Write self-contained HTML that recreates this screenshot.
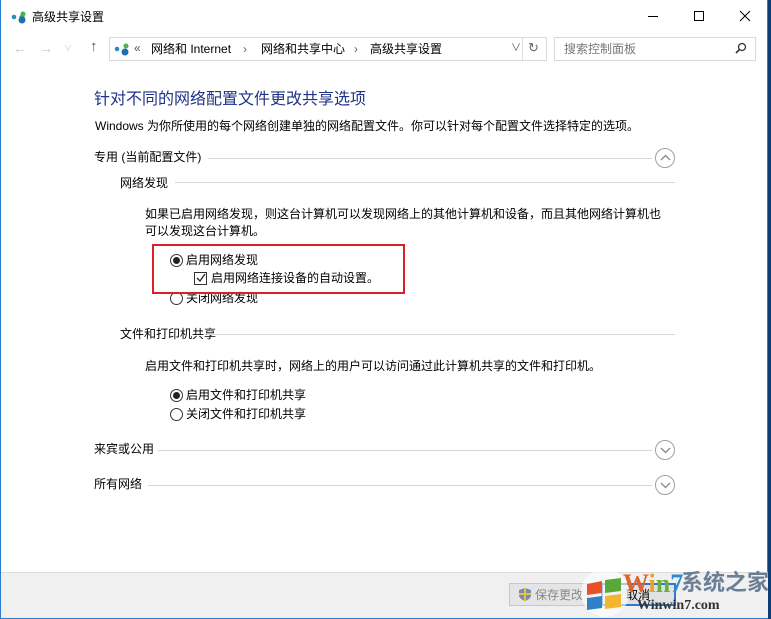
<!DOCTYPE html>
<html><head><meta charset="utf-8"><style>
*{margin:0;padding:0;box-sizing:border-box}
body{width:771px;height:619px;overflow:hidden;background:#0b3e78;font-family:"Liberation Sans","Noto Sans CJK SC","Microsoft YaHei",sans-serif;font-size:12px;color:#000;position:relative}
.win{position:absolute;left:0;top:0;width:768px;height:619px;background:#fff;border:1px solid #2b7bd0;border-top:none}
.a{position:absolute;white-space:nowrap;line-height:14px}
.ln{position:absolute;height:1px;background:#d6d6d6}
.circ{position:absolute;width:20px;height:20px;border:1px solid #a0a0a0;border-radius:50%;}
.circ svg{position:absolute;left:4px;top:5px}
.rad{position:absolute;width:13px;height:13px;border:1px solid #333;border-radius:50%;background:#fff}
.rad.on::after{content:"";position:absolute;left:2px;top:2px;width:7px;height:7px;border-radius:50%;background:#222}
</style></head><body>
<div class="win">
<svg class="a" style="left:10px;top:9px" width="18" height="16"><circle cx="3" cy="8" r="2.3" fill="#2a8bc9"/><path d="M8 8 L12 3 L14 9 Z" fill="#3aa84a"/><circle cx="11" cy="11" r="3.5" fill="#1f6fb5"/><circle cx="12" cy="5" r="2.5" fill="#46b54e"/></svg>
<div class="a" style="left:31px;top:10px;font-size:12px">高级共享设置</div>
<div class="a" style="left:647px;top:16px;width:10px;height:1px;background:#000"></div>
<div class="a" style="left:693px;top:11px;width:10px;height:10px;border:1px solid #000"></div>
<svg class="a" style="left:738px;top:10px" width="12" height="12"><path d="M1 1L11 11M11 1L1 11" stroke="#000" stroke-width="1"/></svg>
<div class="a" style="left:12px;top:41px;color:#c8c8c8;font-size:14px">←</div>
<div class="a" style="left:38px;top:41px;color:#c8c8c8;font-size:14px">→</div>
<div class="a" style="left:63px;top:42px;color:#c8c8c8;font-size:8px">∨</div>
<div class="a" style="left:89px;top:40px;color:#555;font-size:15px">↑</div>
<div class="a" style="left:108px;top:37px;width:438px;height:24px;border:1px solid #d9d9d9"></div>
<svg class="a" style="left:113px;top:41px" width="18" height="16"><circle cx="3" cy="8" r="2.3" fill="#2a8bc9"/><circle cx="11" cy="11" r="3.5" fill="#1f6fb5"/><circle cx="12" cy="5" r="2.5" fill="#46b54e"/></svg>
<div class="a" style="left:133px;top:41px;color:#555">«</div>
<div class="a" style="left:150px;top:42px">网络和 Internet</div>
<div class="a" style="left:242px;top:42px;color:#666">›</div>
<div class="a" style="left:260px;top:42px">网络和共享中心</div>
<div class="a" style="left:353px;top:42px;color:#666">›</div>
<div class="a" style="left:369px;top:42px">高级共享设置</div>
<div class="a" style="left:510px;top:42px;color:#555;font-size:10px">∨</div>
<div class="a" style="left:521px;top:38px;width:1px;height:22px;background:#e0e0e0"></div>
<div class="a" style="left:527px;top:41px;color:#666;font-size:13px">↻</div>
<div class="a" style="left:553px;top:37px;width:202px;height:24px;border:1px solid #d9d9d9"></div>
<div class="a" style="left:563px;top:42px;color:#777">搜索控制面板</div>
<svg class="a" style="left:733px;top:42px" width="14" height="14"><circle cx="8" cy="5" r="3.5" fill="none" stroke="#333" stroke-width="1.3"/><path d="M5.5 7.5L2 11" stroke="#333" stroke-width="1.6"/></svg>
<div class="a" style="left:93px;top:90px;font-size:16px;line-height:20px;color:#1e3287">针对不同的网络配置文件更改共享选项</div>
<div class="a" style="left:94px;top:119px">Windows 为你所使用的每个网络创建单独的网络配置文件。你可以针对每个配置文件选择特定的选项。</div>
<div class="a" style="left:93px;top:150px">专用 (当前配置文件)</div>
<div class="ln" style="left:207px;top:158px;width:444px"></div>
<div class="circ" style="left:654px;top:148px"><svg width="11" height="8"><path d="M1 6L5.5 1.5L10 6" fill="none" stroke="#888" stroke-width="1.3"/></svg></div>
<div class="a" style="left:119px;top:176px">网络发现</div>
<div class="ln" style="left:174px;top:182px;width:500px"></div>
<div class="a" style="left:144px;top:207px">如果已启用网络发现，则这台计算机可以发现网络上的其他计算机和设备，而且其他网络计算机也</div>
<div class="a" style="left:144px;top:224px">可以发现这台计算机。</div>
<div class="rad on" style="left:169px;top:254px"></div>
<div class="a" style="left:185px;top:253px">启用网络发现</div>
<div class="a" style="left:193px;top:272px;width:13px;height:13px;border:1px solid #333"></div>
<svg class="a" style="left:195px;top:273px" width="10" height="10"><path d="M1 5L4 8L9 1" fill="none" stroke="#222" stroke-width="1.3"/></svg>
<div class="a" style="left:210px;top:271px">启用网络连接设备的自动设置。</div>
<div class="rad" style="left:169px;top:292px"></div>
<div class="a" style="left:185px;top:291px">关闭网络发现</div>
<div class="a" style="left:151px;top:244px;width:253px;height:50px;border:2px solid #d8222a"></div>
<div class="a" style="left:119px;top:327px">文件和打印机共享</div>
<div class="ln" style="left:206px;top:334px;width:468px"></div>
<div class="a" style="left:144px;top:359px">启用文件和打印机共享时，网络上的用户可以访问通过此计算机共享的文件和打印机。</div>
<div class="rad on" style="left:169px;top:389px"></div>
<div class="a" style="left:185px;top:388px">启用文件和打印机共享</div>
<div class="rad" style="left:169px;top:408px"></div>
<div class="a" style="left:185px;top:407px">关闭文件和打印机共享</div>
<div class="a" style="left:93px;top:442px">来宾或公用</div>
<div class="ln" style="left:157px;top:450px;width:494px"></div>
<div class="circ" style="left:654px;top:440px"><svg width="11" height="8"><path d="M1 2L5.5 6.5L10 2" fill="none" stroke="#888" stroke-width="1.3"/></svg></div>
<div class="a" style="left:93px;top:477px">所有网络</div>
<div class="ln" style="left:147px;top:485px;width:504px"></div>
<div class="circ" style="left:654px;top:475px"><svg width="11" height="8"><path d="M1 2L5.5 6.5L10 2" fill="none" stroke="#888" stroke-width="1.3"/></svg></div>
<div class="a" style="left:0;top:572px;width:767px;height:46px;background:#f0f0f0;border-top:1px solid #dcdcdc"></div>
<div class="a" style="left:508px;top:583px;width:80px;height:23px;background:#e5e5e5;border:1px solid #c8c8c8"></div>
<svg class="a" style="left:517px;top:587px" width="14" height="15"><path d="M7 1L13 3V8C13 11 10 13 7 14C4 13 1 11 1 8V3Z" fill="#6e8fb8"/><path d="M7 1V14M1 7H13" stroke="#e8c040" stroke-width="2"/></svg>
<div class="a" style="left:534px;top:588px;color:#888">保存更改</div>
<div class="a" style="left:600px;top:583px;width:75px;height:23px;background:#e1e1e1;border:2px solid #2b7bd0"></div>
<div class="a" style="left:625px;top:588px">取消</div>
<svg class="a" style="left:578px;top:568px" width="52" height="50"><circle cx="26" cy="25" r="24" fill="#fff" opacity=".6"/><path d="M8 16L23 13V25L8 27Z" fill="#e8502a"/><path d="M26 12L42 10V23L26 25Z" fill="#5aa83a"/><path d="M8 30L23 28V40L8 42Z" fill="#2f80c8"/><path d="M26 28L42 26V39L26 41Z" fill="#f2b630"/></svg>
<div class="a" style="left:622px;top:571px;font-size:26px;line-height:26px;font-weight:bold;font-family:'Liberation Serif',serif;color:#e3632a">W<span style="color:#f0a020">i</span><span style="color:#6ab03a">n</span><span style="color:#2a8ad0">7</span></div>
<div class="a" style="left:680px;top:570px;font-size:22px;line-height:26px;font-weight:bold;color:#6a7f96">系统之家</div>
<div class="a" style="left:636px;top:598px;font-size:14px;line-height:16px;font-family:'Liberation Serif',serif;font-weight:bold;color:#333">Winwin7.com</div>
</div>
</body></html>
